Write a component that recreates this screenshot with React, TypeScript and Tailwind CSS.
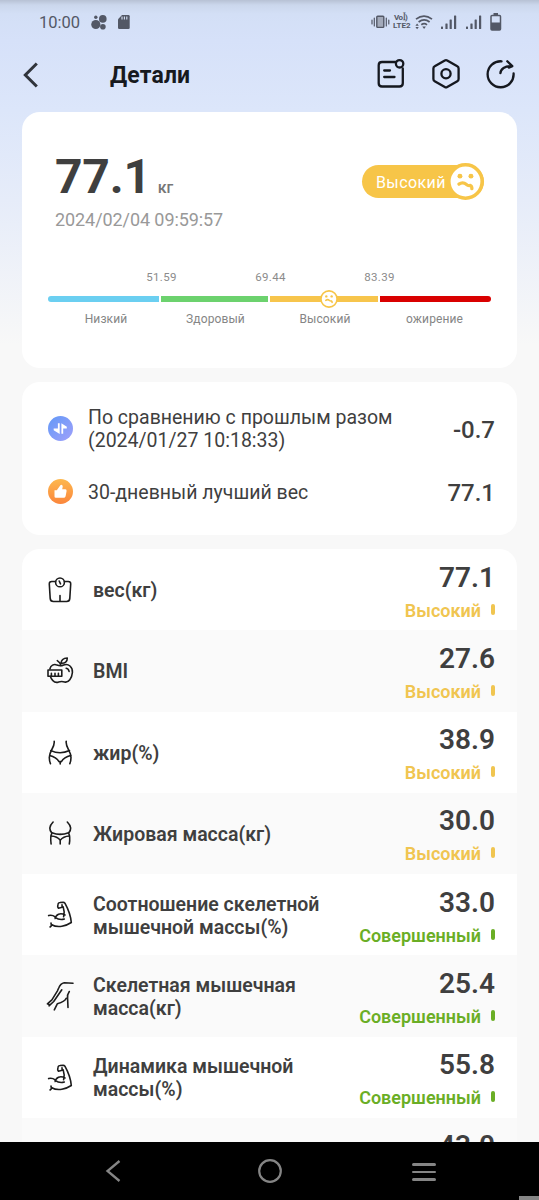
import type { ReactNode } from "react";
import { clsx } from "clsx";

type Status = "high" | "perfect";

type Metric = {
  icon: ReactNode;
  label: string;
  value: string;
  status: Status;
};

const STATUS_LABEL: Record<Status, string> = {
  high: "Высокий",
  perfect: "Совершенный",
};

function LineIcon({ children }: { children: ReactNode }) {
  return (
    <svg
      aria-hidden="true"
      width="30"
      height="30"
      viewBox="0 0 30 30"
      fill="none"
      stroke="#1c1c1c"
      strokeWidth="1.6"
      strokeLinecap="round"
      strokeLinejoin="round"
    >
      {children}
    </svg>
  );
}

const ScaleIcon = (
  <LineIcon>
    <path d="M10.5 6.5H6.8Q4.2 6.5 4.3 9L5.2 23.4Q5.4 26.5 8.4 26.5H21.6Q24.6 26.5 24.8 23.4L25.7 9Q25.8 6.5 23.2 6.5H19.5" />
    <circle cx="15" cy="7.4" r="4.4" />
    <path d="M14.2 6L15.5 8.8M15 20.5V26" />
  </LineIcon>
);

const AppleIcon = (
  <LineIcon>
    <path d="M4.9 13C5.5 9.4 9 7.6 12 9.1Q15.5 10.5 18.6 9C23.5 7.2 27.8 11 27.4 16.5C27 22 23.5 27 19.6 26Q16.6 25.1 13.4 26.1C9.8 27 6.9 25 5.3 20.3" />
    <path d="M3 14H16.8V20.3H3ZM6.4 17.4V20M10 17.4V20M13.4 17.4V20" />
    <path d="M15.8 9.5C15.6 7.4 14.5 6 12.3 4.6M16.1 7.2C16.2 4 18.2 2.2 22.3 2C22.3 5.8 20 7.5 16.1 7.2M21.2 12.2Q23.6 12.7 24.1 15.4" />
  </LineIcon>
);

const WaistIcon = (
  <LineIcon>
    <path d="M9.2 3.3C10 9.5 4.3 12.5 4.3 19.5Q4.3 23 5.5 25.7M21.2 3.3C20.3 9.5 26 12.5 26 19.5Q26 23 24.8 25.7" />
    <path d="M5.8 12.6Q15 17 24.5 12.6M4.7 17.5Q11.3 19 14 23.6H16.4Q19 19 25.7 17.5M15.2 23.6V26" />
  </LineIcon>
);

const HipsIcon = (
  <LineIcon>
    <path d="M8.1 3C3.2 8 4.8 11.7 6.9 14.1C5.3 17 5.5 20.5 6.1 25M22.3 3C27.3 8 25.7 11.7 23.6 14.1C25.2 17 25 20.5 24.3 25" />
    <path d="M6.9 13.8Q15.2 17 23.6 13.8M6.2 17Q12.3 17.3 15.2 21.3Q18.3 17.3 24.3 17M15.2 21.3V25M15.2 15V15.1" />
  </LineIcon>
);

const BicepsIcon = (
  <LineIcon>
    <path d="M17.2 7.3L13.4 8.2Q12.2 7 13 4.2Q13.2 2.6 15 2.5L18.2 2.2Q19.2 2.2 19.9 3.2C22.9 8.6 25.7 15.5 26.3 22.5C21 26 13 28.3 6.7 24.7Q6.4 26 5.1 27" />
    <path d="M17.2 7.3L17 4.8M18.2 6.9Q20 12 18.6 16.7M20 15C15.2 12.3 10.8 14.6 10.2 18.5M10 17.3Q14.6 20.5 19.3 19M3.6 15.6Q7 14.5 10.2 16.9" />
    <path d="M6.7 24.7Q5.9 24.2 6 23" />
  </LineIcon>
);

const BodyIcon = (
  <LineIcon>
    <path d="M28 2.2L19.2 1.8Q15.5 2.5 13.7 7L12.3 10.1L6.9 18.8L2.4 22.8M4 24.8L8.7 20.5L16.8 8.8M2.4 22.8L4.8 23.8" />
    <path d="M24.3 10.5Q21.8 14 22.6 17.5L23 26.5M21.2 17.2Q20 20.5 12.3 22.8L9.3 28.8" />
  </LineIcon>
);

const METRICS: Metric[] = [
  { icon: ScaleIcon, label: "вес(кг)", value: "77.1", status: "high" },
  { icon: AppleIcon, label: "BMI", value: "27.6", status: "high" },
  { icon: WaistIcon, label: "жир(%)", value: "38.9", status: "high" },
  { icon: HipsIcon, label: "Жировая масса(кг)", value: "30.0", status: "high" },
  {
    icon: BicepsIcon,
    label: "Соотношение скелетной мышечной массы(%)",
    value: "33.0",
    status: "perfect",
  },
  { icon: BodyIcon, label: "Скелетная мышечная масса(кг)", value: "25.4", status: "perfect" },
  { icon: BicepsIcon, label: "Динамика мышечной массы(%)", value: "55.8", status: "perfect" },
  { icon: null, label: "", value: "43.0", status: "perfect" },
];

function SadFace({ size }: { size: number }) {
  return (
    <svg aria-hidden="true" width={size} height={size} viewBox="0 0 36 36" fill="none">
      <circle cx="18" cy="18" r="16.2" fill="#ffffff" stroke="#f7c548" strokeWidth="3.4" />
      <circle cx="12.6" cy="12.8" r="2.4" fill="#f7c548" />
      <circle cx="23.3" cy="12.8" r="2.4" fill="#f7c548" />
      <path
        d="M11.6 20.6C14.5 18.6 17 19.3 19 21Q20.5 22.4 22.8 21.8Q24.3 22.4 24.2 25"
        stroke="#f7c548"
        strokeWidth="3.2"
        strokeLinecap="round"
        strokeLinejoin="round"
      />
    </svg>
  );
}

function SignalIcon() {
  return (
    <svg aria-hidden="true" width="16" height="15" viewBox="0 0 16 15" fill="#535866">
      <rect x="0" y="11.5" width="2" height="2.5" rx="0.5" />
      <rect x="4.4" y="8.5" width="2.2" height="5.5" rx="0.5" />
      <rect x="8.6" y="4.5" width="2.2" height="9.5" rx="0.5" />
      <rect x="13" y="0.5" width="2.2" height="13.5" rx="0.5" />
    </svg>
  );
}

function StatusBar() {
  return (
    <div className="flex h-11 items-center pl-[39px] text-[#535866]">
      <span className="w-[52px] pt-px text-[16.5px] leading-5">10:00</span>
      <svg aria-hidden="true" width="16" height="15" viewBox="0 0 16 15" fill="#535866">
        <circle cx="4.8" cy="9.5" r="4.6" />
        <circle cx="11.8" cy="3.9" r="3.8" />
        <circle cx="4.8" cy="2.2" r="1.7" />
        <circle cx="11.9" cy="11.7" r="2.8" />
      </svg>
      <svg aria-hidden="true" className="ml-[11px]" width="12" height="14" viewBox="0 0 12 14">
        <path d="M4 0H10.5Q11.7 0 11.7 1.2V12.8Q11.7 14 10.5 14H1.2Q0 14 0 12.8V4.2Z" fill="#535866" />
        <path d="M4 1.6V4.6M6.4 1.6V4.6M8.8 1.6V4.6" stroke="#d5e0f5" strokeWidth="1.1" />
      </svg>
      <svg aria-hidden="true" className="ml-[241px]" width="19" height="14" viewBox="0 0 19 14" fill="none" stroke="#535866">
        <rect x="5.8" y="1.2" width="7" height="11.2" rx="0.8" fill="#a3aaba" strokeWidth="1.4" />
        <path d="M3.3 3V11M15.3 3V11M1 5V9M17.8 5V9" strokeWidth="1.2" strokeLinecap="round" />
      </svg>
      <div className="ml-[3px] w-[19px] text-[8px] leading-[8px] font-bold whitespace-nowrap">
        <div className="pl-px tracking-[-0.5px]">Voꟾ)</div>
        <div>LTE2</div>
      </div>
      <svg aria-hidden="true" className="ml-[3px]" width="18" height="15" viewBox="0 0 18 15" fill="none" stroke="#535866">
        <path d="M1 4.2Q9 -2 17 4.2M3.6 7Q9.2 2.7 14.6 7M6.3 9.8Q9.3 7.6 12 9.8" strokeWidth="1.7" />
        <path d="M7.3 11.5H10.9L9.1 13.9Z" fill="#535866" stroke="none" />
        <path d="M0.4 10.7L2.1 8.5L3.8 10.7ZM0.4 12L2.1 14.2L3.8 12Z" fill="#535866" stroke="none" />
      </svg>
      <span className="ml-2">
        <SignalIcon />
      </span>
      <span className="ml-[9px]">
        <SignalIcon />
      </span>
      <svg aria-hidden="true" className="ml-2" width="12" height="18" viewBox="0 0 12 18">
        <path d="M3.5 0H8V2H3.5Z" fill="#535866" />
        <rect x="1" y="2.4" width="9.5" height="14.6" rx="1" fill="none" stroke="#535866" strokeWidth="1.5" />
        <rect x="1" y="9.5" width="9.5" height="7.5" fill="#535866" />
      </svg>
    </div>
  );
}

function Header() {
  return (
    <header className="mb-1.5 flex h-[62px] items-center pl-[22px] text-[#15181f]">
      <svg aria-hidden="true" width="18" height="26" viewBox="0 0 18 26" fill="none" stroke="#30343c" strokeWidth="3">
        <path d="M14.8 1.5L3.3 13L14.8 24.5" />
      </svg>
      <h1 className="mt-0.5 ml-[70px] w-[265px] text-[23px] leading-7 font-bold tracking-[0.15px] text-[#17191e]">
        Детали
      </h1>
      <svg
        aria-hidden="true"
        className="-mt-0.5"
        width="32"
        height="32"
        viewBox="0 0 32 32"
        fill="none"
        stroke="currentColor"
        strokeWidth="2.3"
        strokeLinecap="round"
      >
        <path d="M20.5 4H7Q3.7 4 3.7 7.3V25.2Q3.7 28.5 7 28.5H24.5Q27.8 28.5 27.8 25.2V10.5" />
        <circle cx="24.6" cy="5.8" r="3.7" />
        <path d="M9.2 12.5H15M9.2 19H19.5" />
      </svg>
      <svg
        aria-hidden="true"
        className="-mt-0.5 ml-[23px]"
        width="32"
        height="32"
        viewBox="0 0 32 32"
        fill="none"
        stroke="currentColor"
        strokeWidth="2.3"
        strokeLinejoin="round"
      >
        <path d="M14.8 2.5Q16 1.8 17.2 2.5L27.3 8.3Q28.6 9 28.6 10.5V21Q28.6 22.5 27.3 23.2L17.2 29.1Q16 29.8 14.8 29.1L4.7 23.2Q3.4 22.5 3.4 21V10.5Q3.4 9 4.7 8.3Z" />
        <circle cx="16" cy="15.8" r="4.6" />
      </svg>
      <svg
        aria-hidden="true"
        className="-mt-0.5 ml-[23px]"
        width="32"
        height="32"
        viewBox="0 0 32 32"
        fill="none"
        stroke="currentColor"
        strokeWidth="2.3"
        strokeLinecap="round"
        strokeLinejoin="round"
      >
        <path d="M16.5 3.3A13 13 0 1 0 28.6 15.5" />
        <path d="M15.4 15.2C15.6 10.8 20 8 26.3 8.1M22.3 3.2L27.3 8.1L23.8 9.6" />
      </svg>
    </header>
  );
}

function SummaryCard() {
  return (
    <section className="h-64 rounded-[18px] bg-white px-[26px] pt-[38px]">
      <div className="flex h-[54px] items-start justify-between pl-[7px]">
        <div className="flex items-baseline text-[#3f3f3f]">
          <span className="text-[48px] leading-[54px] font-bold tracking-[-0.2px]">77.1</span>
          <span className="ml-[7px] text-base font-medium text-[#777777]">кг</span>
        </div>
        <div className="mt-[15px] mr-[7px] flex h-[33px] w-[122px] items-center justify-between rounded-full bg-[#f7c548] pl-3.5 text-base tracking-[0.4px] text-white">
          <span className="mt-0.5">Высокий</span>
          <span className="flex shrink-0">
            <SadFace size={37} />
          </span>
        </div>
      </div>
      <div className="mt-1 pl-[7px] text-[18px] leading-6 tracking-[-0.08px] text-[#999999]">2024/02/04 09:59:57</div>

      <div className="mt-[37px] grid grid-cols-[59px_109px_109px_109px_57px] text-center text-[11.5px] leading-4 tracking-[0.3px] text-[#8b8b8b]">
        <span />
        <span>51.59</span>
        <span>69.44</span>
        <span>83.39</span>
      </div>
      <div className="relative mt-[11px] flex h-1.5 gap-0.5">
        <div className="w-[111px] rounded-l-full bg-[#6bcff1]" />
        <div className="w-[107px] bg-[#6cd26e]" />
        <div className="w-[108px] bg-[#f7c54c]" />
        <div className="w-[111px] rounded-r-full bg-[#d90000]" />
        <span className="absolute top-[-6px] left-[272px]">
          <SadFace size={18} />
        </span>
      </div>
      <div className="mt-[9px] grid w-[443px] grid-cols-[116px_103px_116px_103px] text-center text-[12px] leading-4 tracking-[0.12px] text-[#858585]">
        <span>Низкий</span>
        <span>Здоровый</span>
        <span>Высокий</span>
        <span>ожирение</span>
      </div>
    </section>
  );
}

function CompareCard() {
  return (
    <section className="mt-3.5 h-[153px] rounded-[18px] bg-white pt-[23px] pr-[22px] pl-[26px]">
      <div className="flex h-12 items-center">
        <svg aria-hidden="true" className="-mt-0.5" width="25" height="25" viewBox="0 0 25 25" fill="none">
          <defs>
            <linearGradient id="compare" x1="0" y1="0" x2="1" y2="1">
              <stop stopColor="#6299f7" />
              <stop offset="1" stopColor="#a0a0fa" />
            </linearGradient>
          </defs>
          <circle cx="12.5" cy="12.5" r="12.5" fill="url(#compare)" />
          <path d="M9.9 7.2H11.7V18L5.7 14.2V12.6H9.9ZM13.4 17.8V7.2L18.8 10.8V12.4H15.2V17.8Z" fill="#ffffff" />
        </svg>
        <div className="ml-[15px] flex-1 text-[19.5px] leading-[23px] text-[#3f3f3f]">
          <div>По сравнению с прошлым разом</div>
          <div>(2024/01/27 10:18:33)</div>
        </div>
        <span className="mt-0.5 text-[24px] font-medium text-[#3f3f3f]">-0.7</span>
      </div>
      <div className="mt-4 flex h-12 items-center">
        <svg aria-hidden="true" className="-mt-[3px]" width="25" height="25" viewBox="0 0 25 25">
          <defs>
            <linearGradient id="best" x1="0" y1="0" x2="0" y2="1">
              <stop stopColor="#fdb84e" />
              <stop offset="1" stopColor="#fb863c" />
            </linearGradient>
          </defs>
          <circle cx="12.5" cy="12.5" r="12.5" fill="url(#best)" />
          <path
            d="M6.5 11.3H8.8V18.8H7.8Q6.5 18.8 6.5 17.5ZM8.8 11.2L12.2 6.4Q13.3 5.2 14.5 6.4Q15.1 7.2 14.2 10.2H17.4Q18.8 10.4 18.6 12L17.6 17.2Q17.2 18.8 15.7 18.8H8.8Z"
            fill="#ffffff"
          />
        </svg>
        <span className="ml-[15px] flex-1 text-[19.5px] text-[#3f3f3f]">30-дневный лучший вес</span>
        <span className="text-[24px] font-medium text-[#3f3f3f]">77.1</span>
      </div>
    </section>
  );
}

function MetricRow({ metric, striped }: { metric: Metric; striped: boolean }) {
  const isHigh = metric.status === "high";

  return (
    <li
      className={clsx(
        "flex h-[81.25px] shrink-0 items-center pr-[22px] pl-[23px]",
        striped ? "bg-[#fafafa]" : "bg-white",
      )}
    >
      <div className="mt-px h-[30px] w-[30px]">{metric.icon}</div>
      <div className="mt-0.5 ml-[18px] w-[250px] text-[19.5px] leading-[23px] font-semibold text-[#3f3f3f]">
        {metric.label}
      </div>
      <div className="mt-[5px] ml-auto flex flex-col items-end whitespace-nowrap">
        <span className="text-[28px] leading-8 font-semibold text-[#3f3f3f]">{metric.value}</span>
        <span
          className={clsx(
            "mt-[5px] flex items-center text-[18px] leading-6 font-semibold",
            isHigh ? "text-[#f0c550]" : "text-[#6aae25]",
          )}
        >
          {STATUS_LABEL[metric.status]}
          <i className={clsx("-mt-[3px] ml-2.5 h-[11px] w-1 rounded-sm", isHigh ? "bg-[#f0c550]" : "bg-[#6aae25]")} />
        </span>
      </div>
    </li>
  );
}

function NavigationBar() {
  return (
    <nav className="relative flex h-[58px] shrink-0 items-center bg-black pl-[104px]">
      <svg aria-hidden="true" width="18" height="24" viewBox="0 0 18 24" fill="none" stroke="#858585" strokeWidth="2.3">
        <path d="M15.5 2L3.5 12L15.5 22" />
      </svg>
      <svg aria-hidden="true" className="ml-[135px]" width="26" height="26" viewBox="0 0 26 26" fill="none" stroke="#858585" strokeWidth="2.2">
        <circle cx="13" cy="13" r="10.8" />
      </svg>
      <div className="mt-0.5 ml-[129px] grid w-6 gap-[5px]">
        <span className="h-[2.6px] rounded-full bg-[#858585]" />
        <span className="h-[2.6px] rounded-full bg-[#858585]" />
        <span className="h-[2.6px] rounded-full bg-[#858585]" />
      </div>
      <span className="absolute right-0 bottom-0 h-1 w-5 bg-[#858585]" />
    </nav>
  );
}

export default function App() {
  return (
    <div className="flex h-[1200px] w-[539px] flex-col overflow-hidden bg-[#f8f8f8] font-[Roboto,sans-serif]">
      <main className="min-h-0 flex-1 overflow-hidden bg-[linear-gradient(180deg,#b7c1d4_0px,#cbd7ec_5px,#d3dff6_14px,#d6e1f9_40px,#dce6fa_110px,#e6ecf9_200px,#f8f8f8_345px)]">
        <StatusBar />
        <Header />
        <div className="px-[22px]">
          <SummaryCard />
          <CompareCard />
          <ul className="mt-3.5 overflow-hidden rounded-t-[18px]">
            {METRICS.map((metric, index) => (
              <MetricRow key={metric.label} metric={metric} striped={index % 2 === 1} />
            ))}
          </ul>
        </div>
      </main>
      <NavigationBar />
    </div>
  );
}
